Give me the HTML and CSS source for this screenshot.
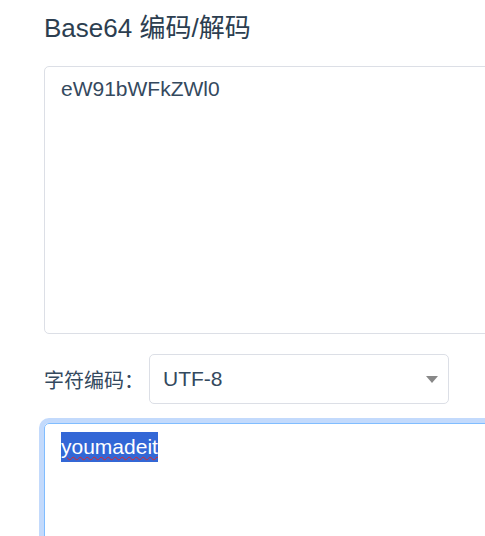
FILE: index.html
```html
<!DOCTYPE html>
<html lang="zh-CN">
<head>
    <meta charset="UTF-8">
    <meta name="viewport" content="width=device-width, initial-scale=1.0">
    <title>Base64 编码/解码</title>
    <link rel="stylesheet" href="styles.css">
</head>
<body>
    <div class="container">
        <h2 class="title">Base64 编码/解码</h2>

        <!-- Encoded output -->
        <div class="text-box">eW91bWFkZWl0</div>

        <!-- Charset picker -->
        <div class="charset-row">
            <label class="charset-label">字符编码：</label>
            <div class="charset-select">
                <span>UTF-8</span>
                <svg class="caret" width="12" height="7" viewBox="0 0 12 7">
                    <path d="M0 0 H12 L6 7 Z" fill="#888"></path>
                </svg>
            </div>
        </div>

        <!-- Plain text input -->
        <div class="text-box focused"><span class="selected">youmadeit</span></div>
    </div>
</body>
</html>
```

FILE: styles.css
```css
body {
    font-family: "Liberation Sans", "Noto Sans CJK SC", sans-serif;
    background-color: #fff;
    margin: 0;
    padding: 0;
    overflow: hidden;
}

.container {
    width: 640px;
    padding: 13px 0 0 44px;
}

.title {
    margin: 0 0 22px 0;
    font-size: 26px;
    font-weight: normal;
    line-height: 31px;
    color: #2c3e50;
}

.text-box {
    height: 268px;
    padding: 10px 16px;
    box-sizing: border-box;
    border: 1px solid #dcdfe6;
    border-radius: 5px;
    font-size: 21px;
    line-height: 24px;
    color: #34495e;
}

.text-box.focused {
    height: 130px;
    border-color: #80bdff;
    box-shadow: 0 0 0 5px #c3dafc;
    padding-top: 11px;
}

.selected {
    background: #3367d6;
    color: white;
    padding: 3px 0 4px;
    text-decoration: underline wavy #e0262b;
    text-decoration-thickness: 1px;
    text-underline-offset: 2px;
}

.charset-row {
    display: flex;
    align-items: center;
    margin: 20px 0 19px 0;
}

.charset-label {
    font-family: "Liberation Sans", "Noto Sans CJK TC", sans-serif;
    font-size: 20px;
    color: #34495e;
    width: 105px;
}

.charset-select {
    width: 300px;
    height: 50px;
    box-sizing: border-box;
    padding: 0 10px 0 13px;
    border: 1px solid #dcdfe6;
    border-radius: 5px;
    display: flex;
    align-items: center;
    justify-content: space-between;
    font-size: 21px;
    color: #34495e;
}
```
